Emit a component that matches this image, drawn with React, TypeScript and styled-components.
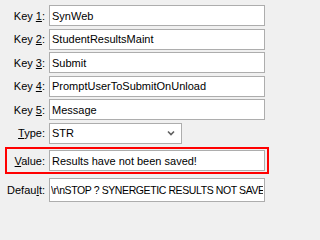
import styled, { createGlobalStyle } from 'styled-components';

const GlobalStyle = createGlobalStyle`
  html, body {
    margin: 0;
    padding: 0;
    background: #f0f0f0;
  }
  body {
    font-family: 'Liberation Sans', Arial, sans-serif;
    font-size: 11px;
    color: #000;
  }
`;

const Form = styled.div`
  width: 270px;
  height: 202px;
  box-sizing: border-box;
  padding: 5px 5px 0 0;
  display: flex;
  flex-direction: column;
  gap: 2.5px;
  overflow: hidden;
`;

const Row = styled.div<{ $label?: number }>`
  display: grid;
  grid-template-columns: ${(p) => p.$label ?? 49}px 1fr;
  align-items: center;
`;

const Label = styled.label`
  text-align: right;
  padding-right: 4px;
  white-space: nowrap;
`;

const Key = styled.u`
  text-decoration: underline;
`;

// the default field holds a long value drawn in a narrower face
const Field = styled.input<{ $narrow?: boolean }>`
  box-sizing: border-box;
  width: 100%;
  height: ${(p) => (p.$narrow ? 24 : 21)}px;
  margin: 0;
  padding: 0 ${(p) => (p.$narrow ? 1 : 2)}px;
  border: 1px solid #adadad;
  background: #fff;
  font-family: inherit;
  font-size: ${(p) => (p.$narrow ? 10.5 : 11)}px;
  letter-spacing: ${(p) => (p.$narrow ? -0.4 : 0)}px;
  color: #000;
  outline: none;
`;

const Combo = styled.div`
  box-sizing: border-box;
  width: 133px;
  height: 21px;
  border: 1px solid #adadad;
  background: #fff;
  display: flex;
  align-items: center;
  justify-content: space-between;
  padding: 0 6px 0 2px;
`;

const Highlight = styled.div`
  margin: 1px -4px 1px 5px;
  border: 2px solid #ff0000;
  padding: 1px 2px 1px 0;
`;

const Chevron = () => (
  <svg width="8" height="6" viewBox="0 0 8 6">
    <path d="M1 1.5 L4 4.5 L7 1.5" fill="none" stroke="#606060" strokeWidth="1.6" />
  </svg>
);

const keys = ['SynWeb', 'StudentResultsMaint', 'Submit', 'PromptUserToSubmitOnUnload', 'Message'];

export default function App() {
  return (
    <>
      <GlobalStyle />
      <Form>
        {keys.map((v, i) => (
          <Row key={i}>
            <Label>
              Key <Key>{i + 1}</Key>:
            </Label>
            <Field readOnly value={v} />
          </Row>
        ))}
        <Row>
          <Label>
            <Key>T</Key>ype:
          </Label>
          <Combo>
            <span>STR</span>
            <Chevron />
          </Combo>
        </Row>
        <Highlight>
          <Row $label={42}>
            <Label>
              <Key>V</Key>alue:
            </Label>
            <Field readOnly value="Results have not been saved!" />
          </Row>
        </Highlight>
        <Row>
          <Label>
            Defau<Key>l</Key>t:
          </Label>
          <Field $narrow readOnly value="\r\nSTOP ? SYNERGETIC RESULTS NOT SAVED" />
        </Row>
      </Form>
    </>
  );
}
